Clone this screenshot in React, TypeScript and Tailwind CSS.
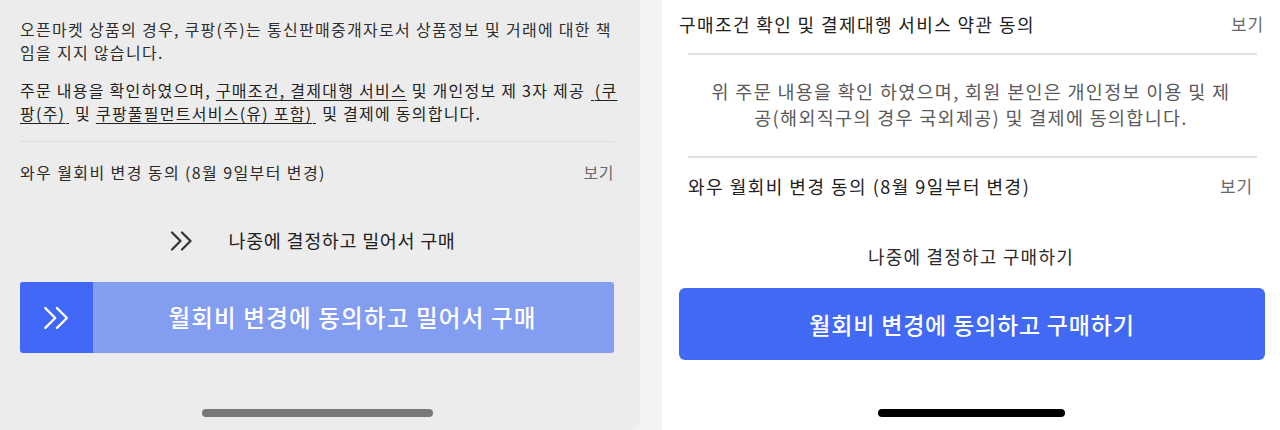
import React from "react";

const font = { fontFamily: '"Noto Sans CJK KR", "Noto Sans", sans-serif' };

function DoubleChevron({ className, strokeWidth = 2 }: { className?: string; strokeWidth?: number }) {
  return (
    <svg viewBox="0 0 24 20" className={className} fill="none" stroke="currentColor" strokeWidth={strokeWidth} strokeLinecap="round" strokeLinejoin="round">
      <path d="M2 1.5 L10.5 10 L2 18.5" />
      <path d="M12 1.5 L20.5 10 L12 18.5" />
    </svg>
  );
}

function Tick() {
  return <span className="inline-block w-[3px] h-[1px] bg-[#222] align-[-4px] mx-[1px]" />;
}

export default function App() {
  return (
    <div className="flex w-[1280px] h-[430px] overflow-hidden bg-[#f3f3f3]" style={font}>
      {/* Left panel */}
      <div className="w-[640px] h-[430px] bg-[#ececec] rounded-br-[10px] flex flex-col pl-5 pr-[26px] text-[#2e2e2e]">
        <p className="mt-[18px] text-[16px] leading-[23px] tracking-[1.3px] whitespace-nowrap">
          오픈마켓 상품의 경우, 쿠팡(주)는 통신판매중개자로서 상품정보 및 거래에 대한 책<br />
          임을 지지 않습니다.
        </p>
        <p className="mt-[15px] text-[16px] leading-[23px] tracking-[1.25px] text-[#222] whitespace-nowrap">
          주문 내용을 확인하였으며, <span className="underline underline-offset-[3px]">구매조건, 결제대행 서비스</span> 및 개인정보 제 3자 제공{" "}
          <Tick />
          <span className="underline underline-offset-[3px]">(쿠</span>
          <br />
          <span className="underline underline-offset-[3px]">팡(주)</span>
          <Tick /> 및 <span className="underline underline-offset-[3px]">쿠팡풀필먼트서비스(유) 포함)</span>
          <Tick /> 및 결제에 동의합니다.
        </p>
        <div className="mt-[16px] h-px bg-[#dcdce2]" />
        <div className="h-[60px] flex items-center justify-between">
          <span className="text-[16px] tracking-[1.4px] text-[#2a2a2a]">와우 월회비 변경 동의 (8월 9일부터 변경)</span>
          <span className="text-[16px] tracking-[0.5px] text-[#6b6b6b]">보기</span>
        </div>
        <div className="h-[22px]" />
        <div className="flex items-center justify-center h-[34px] pr-[8px]">
          <DoubleChevron className="w-[24px] h-[20px] text-[#333]" strokeWidth={2.2} />
          <span className="ml-[34px] text-[18.5px] tracking-[0.7px] text-[#222]">나중에 결정하고 밀어서 구매</span>
        </div>
        <div className="mt-[24px] flex h-[71px] rounded-[3px] overflow-hidden">
          <div className="w-[73px] bg-[#4067f5] flex items-center justify-center">
            <DoubleChevron className="w-[28px] h-[30px] text-white" strokeWidth={2} />
          </div>
          <div className="flex-1 bg-[#839df0] flex items-center justify-center">
            <span className="text-white text-[23.5px] tracking-[1.2px] font-medium pr-[2px]">월회비 변경에 동의하고 밀어서 구매</span>
          </div>
        </div>
        <div className="flex-1 flex items-end justify-center pb-[13px]">
          <div className="w-[231px] h-[8px] rounded-full bg-[#787878]" />
        </div>
      </div>

      {/* Gap strip */}
      <div className="w-[22px]" />

      {/* Right panel */}
      <div className="flex-1 bg-white flex flex-col text-[#222]">
        <div className="h-[50px] flex items-center justify-between pl-[17px] pr-[16px] pb-[2px]">
          <span className="text-[18px] tracking-[1.4px]">구매조건 확인 및 결제대행 서비스 약관 동의</span>
          <span className="text-[17px] tracking-[0.8px] text-[#6a6a6a]">보기</span>
        </div>
        <div className="ml-[26px] mr-[23px] mt-[3px] h-[2px] bg-[#e2e2e2]" />
        <div className="h-[101px] flex items-center justify-center pb-[3px]">
          <p className="text-center text-[18.5px] leading-[26px] tracking-[1.3px] text-[#5b5b5b] whitespace-nowrap">
            위 주문 내용을 확인 하였으며, 회원 본인은 개인정보 이용 및 제<br />
            공(해외직구의 경우 국외제공) 및 결제에 동의합니다.
          </p>
        </div>
        <div className="ml-[26px] mr-[23px] h-[2px] bg-[#e2e2e2]" />
        <div className="h-[56px] flex items-center justify-between pl-[26px] pr-[27px]">
          <span className="text-[18px] tracking-[1.5px]">와우 월회비 변경 동의 (8월 9일부터 변경)</span>
          <span className="text-[17px] tracking-[0.8px] text-[#6a6a6a]">보기</span>
        </div>
        <div className="mt-[28px] h-[28px] flex items-center justify-center">
          <span className="text-[18px] tracking-[1.2px] text-[#2a2a2a]">나중에 결정하고 구매하기</span>
        </div>
        <div className="ml-[17px] mt-[18px] mr-[15px] h-[72px] rounded-[6px] bg-[#4169f4] flex items-center justify-center">
          <span className="text-white text-[23px] tracking-[0.8px] font-medium">월회비 변경에 동의하고 구매하기</span>
        </div>
        <div className="flex-1 flex items-end justify-center pb-[13px]">
          <div className="w-[187px] h-[8px] rounded-full bg-black" />
        </div>
      </div>
    </div>
  );
}
